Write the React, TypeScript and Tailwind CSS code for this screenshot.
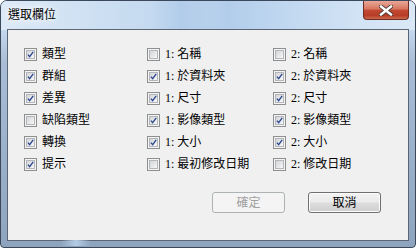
import React from "react";

const FONT = "font-['Liberation_Serif','Noto_Sans_CJK_TC',serif]";

function Box({ checked }: { checked: boolean }) {
  return (
    <div className="w-[13px] h-[13px] border border-[#8e8f8f] bg-[#f4f4f4] p-px shrink-0">
      <div className="w-full h-full border border-[#b3b6ba] bg-gradient-to-br from-[#d3d5d8] to-[#f7f7f7] relative">
        {checked && (
          <svg viewBox="0 0 9 9" className="absolute inset-0 w-full h-full overflow-visible">
            <path d="M1.2 4.6 L3.4 7.2 L8 1.2" fill="none" stroke="#2a4691" strokeWidth="1.7" strokeLinejoin="miter" />
          </svg>
        )}
      </div>
    </div>
  );
}

function Item({ label, checked }: { label: string; checked: boolean }) {
  return (
    <div className="h-[22px] flex items-center gap-[5px]">
      <Box checked={checked} />
      <span className={`${FONT} text-[12px] leading-[14px] text-black whitespace-nowrap`}>{label}</span>
    </div>
  );
}

const col1: [string, boolean][] = [
  ["類型", true],
  ["群組", true],
  ["差異", true],
  ["缺陷類型", false],
  ["轉換", true],
  ["提示", true],
];
const col2: [string, boolean][] = [
  ["1: 名稱", false],
  ["1: 於資料夾", true],
  ["1: 尺寸", true],
  ["1: 影像類型", true],
  ["1: 大小", true],
  ["1: 最初修改日期", false],
];
const col3: [string, boolean][] = [
  ["2: 名稱", false],
  ["2: 於資料夾", true],
  ["2: 尺寸", true],
  ["2: 影像類型", true],
  ["2: 大小", true],
  ["2: 修改日期", false],
];

export default function App() {
  const rows = col1.map((c, i) => [c, col2[i], col3[i]]);
  return (
    <div className="w-[416px] h-[248px] bg-white">
      <div className="w-[416px] h-[248px] rounded-t-[7px] rounded-b-[4px] border border-[#3b4859] bg-[linear-gradient(to_bottom,#dbe8f6_0px,#c5daf0_28px,#a9bed6_60px,#8ea3bd_100%)] flex flex-col overflow-hidden relative">
        <div className="absolute inset-x-0 top-0 h-[29px] bg-[linear-gradient(to_right,#dce9f7_0%,#cfe1f3_20%,#c2d8ef_40%,#b2cdeb_55%,#c4daf1_72%,#d3e4f5_88%,#dae8f6_100%)]" />
        <div className="absolute left-[150px] top-0 w-[60px] h-[29px] bg-[linear-gradient(to_right,transparent,#a9c6e8,transparent)] opacity-60" />
        <div className="h-[28px] flex items-start relative">
          <div className={`${FONT} text-[12px] leading-[14px] text-black pl-[7px] pt-[7px] [text-shadow:0_0_6px_#ffffff,0_0_10px_#ffffff]`}>
            選取欄位
          </div>
          <div className="ml-auto mr-[6px] w-[46px] h-[19px] rounded-b-[4px] border border-t-0 border-[#6e2d22] bg-[linear-gradient(to_bottom,#e8a898_0%,#d87560_45%,#c24a33_50%,#b73c25_80%,#cc6a4e_100%)] flex items-center justify-center">
            <svg width="14" height="11" viewBox="0 0 14 11">
              <path d="M2 1.5 L12 9.5 M12 1.5 L2 9.5" stroke="#4a3a3a" strokeWidth="4.2" strokeLinecap="square" />
              <path d="M2 1.5 L12 9.5 M12 1.5 L2 9.5" stroke="#ffffff" strokeWidth="2.4" strokeLinecap="square" />
            </svg>
          </div>
        </div>
        <div className="mx-[6px] mb-[6px] flex-1 border border-[#5b6573] bg-[#f0f0f0] flex flex-col relative">
          <div className="pl-[16px] pt-[13px] grid grid-cols-[123px_126px_1fr]">
            {rows.map((r, i) =>
              r.map(([label, checked], j) => <Item key={`${i}-${j}`} label={label} checked={checked} />)
            )}
          </div>
          <div className="mt-[17px] flex justify-end gap-[23px] pr-[27px]">
            <div className={`${FONT} w-[73px] h-[21px] rounded-[3px] border border-[#adb2b5] bg-[#f4f4f4] text-[#a0a0a0] text-[12px] flex items-center justify-center`}>
              確定
            </div>
            <div className={`${FONT} w-[73px] h-[21px] rounded-[3px] border border-[#707070] bg-[linear-gradient(to_bottom,#f2f2f2_0%,#ebebeb_48%,#dddddd_52%,#cfcfcf_100%)] text-black text-[12px] flex items-center justify-center shadow-[inset_0_0_0_1px_#fcfcfc]`}>
              取消
            </div>
          </div>
        </div>
        <div className="absolute left-[60px] bottom-px w-[30px] h-[6px] bg-[linear-gradient(to_right,transparent,#b4cbe6,transparent)]" />
      </div>
    </div>
  );
}
